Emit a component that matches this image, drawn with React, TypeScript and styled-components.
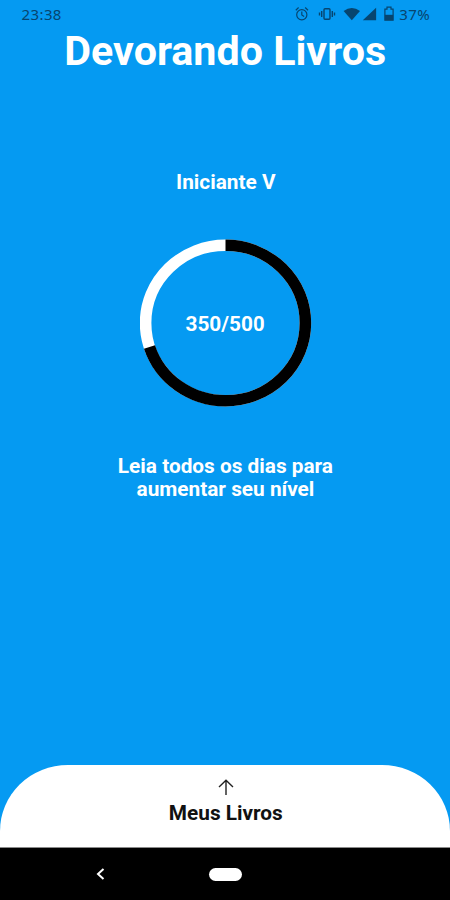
import React from "react";
import styled, { createGlobalStyle } from "styled-components";

const GlobalStyle = createGlobalStyle`
  body {
    margin: 0;
    background: #059af2;
  }
`;

const Screen = styled.div`
  display: flex;
  flex-direction: column;
  width: 450px;
  height: 900px;
  overflow: hidden;
  background: #059af2;
  color: #fff;
  font-family: Roboto, sans-serif;
`;

const StatusBar = styled.header`
  display: flex;
  align-items: center;
  justify-content: space-between;
  height: 30px;
  padding: 0 20px 2px 21.5px;
  box-sizing: border-box;
  color: #07456f;
  font-family: "Noto Sans", sans-serif;
  font-size: 15px;
  letter-spacing: 0.4px;
  line-height: 28px;
`;

const StatusIcons = styled.div`
  display: flex;
  align-items: center;
  height: 28px;

  svg {
    display: block;
  }
`;

const Main = styled.main`
  display: flex;
  flex: 1;
  flex-direction: column;
  align-items: center;
  padding-left: 1px;
`;

const Title = styled.h1`
  margin: 0;
  font-size: 40px;
  font-weight: 700;
  line-height: 44px;
  white-space: nowrap;
  transform: scaleX(1.03);
`;

const Label = styled.p<{ $top?: number; $dark?: boolean }>`
  margin: ${({ $top = 0 }) => $top}px 0 0;
  color: ${({ $dark }) => ($dark ? "#111" : "#fff")};
  font-size: 20px;
  font-weight: 700;
  line-height: 23px;
  text-align: center;
  white-space: nowrap;
  transform: scaleX(1.04);
`;

const Progress = styled.div`
  display: grid;
  place-items: center;
  width: 172px;
  height: 168px;
  margin-top: 45px;

  > * {
    grid-area: 1 / 1;
  }

  svg {
    display: block;
  }
`;

const Sheet = styled.section`
  display: flex;
  flex-direction: column;
  align-items: center;
  height: 83px;
  padding: 13px 0 0 1px;
  box-sizing: border-box;
  border-bottom: 1px solid #8a8a8a;
  border-radius: 68px 68px 0 0 / 66px 66px 0 0;
  background: #fff;
`;

const NavBar = styled.nav`
  display: grid;
  grid-template-columns: 1fr auto 1fr;
  align-items: center;
  height: 52px;
  background: #000;
`;

const BackButton = styled.button`
  display: flex;
  width: 12px;
  margin-left: 94px;
  padding: 0;
  border: 0;
  background: none;
`;

const HomePill = styled.span`
  width: 33px;
  height: 13px;
  border-radius: 7px;
  background: #fff;
`;

const READ = 350;
const GOAL = 500;

function ProgressRing() {
  return (
    <svg width="172" height="168" viewBox="0 0 172 168" fill="none">
      <g transform="translate(85.5 84) scale(1 0.973) rotate(-90)" strokeWidth="11.6">
        <circle r="79.9" stroke="#fff" />
        <circle r="79.9" stroke="#000" pathLength={GOAL} strokeDasharray={`${READ} ${GOAL}`} />
      </g>
    </svg>
  );
}

function StatusGlyphs() {
  return (
    <svg width="104" height="20" viewBox="295.2 4 104 20" fill="none" stroke="currentColor">
      <circle cx="302" cy="14.7" r="5.1" strokeWidth="1.2" />
      <path d="M302 11.5v3.4l2.3 1.6M296 10.2l2.8-2.7M308.2 10.2l-2.8-2.7" strokeWidth="1.2" />
      <rect x="324.2" y="8.8" width="6" height="10.4" rx="1" strokeWidth="1.4" />
      <path d="M321.9 11v6M332.5 11v6M319.7 12.5v3M334.7 12.5v3" strokeWidth="1.4" />
      <path d="M343.8 11.1Q352 5 360.2 11.1L352 20.3Z" fill="currentColor" stroke="none" />
      <path d="M363 20.3L376.3 7.8V20.3Z" fill="currentColor" stroke="none" />
      <path d="M387.2 7.2h4v2h2.1v10.9h-8.2V9.2h2.1Z" strokeWidth="1.2" />
      <path d="M385 14.8h8.4v5.4H385Z" fill="currentColor" stroke="none" />
    </svg>
  );
}

export default function App() {
  return (
    <>
      <GlobalStyle />
      <Screen>
        <StatusBar>
          <span>23:38</span>
          <StatusIcons>
            <StatusGlyphs />
            <span>37%</span>
          </StatusIcons>
        </StatusBar>
        <Main>
          <Title>Devorando Livros</Title>
          <Label $top={97}>Iniciante V</Label>
          <Progress>
            <ProgressRing />
            <Label $top={3}>
              {READ}/{GOAL}
            </Label>
          </Progress>
          <Label $top={48}>
            Leia todos os dias para
            <br />
            aumentar seu nível
          </Label>
        </Main>
        <Sheet>
          <svg width="18" height="19" viewBox="0 0 18 19" fill="none" stroke="#222" strokeWidth="1.4">
            <path d="M9 17V2.3M2 9L9 2.3L16 9" />
          </svg>
          <Label $top={5} $dark>
            Meus Livros
          </Label>
        </Sheet>
        <NavBar>
          <BackButton aria-label="Voltar">
            <svg width="12" height="14" viewBox="0 0 12 14" fill="none" stroke="#fff" strokeWidth="2">
              <path d="M9.5 2L4 7L9.5 12" />
            </svg>
          </BackButton>
          <HomePill />
        </NavBar>
      </Screen>
    </>
  );
}
